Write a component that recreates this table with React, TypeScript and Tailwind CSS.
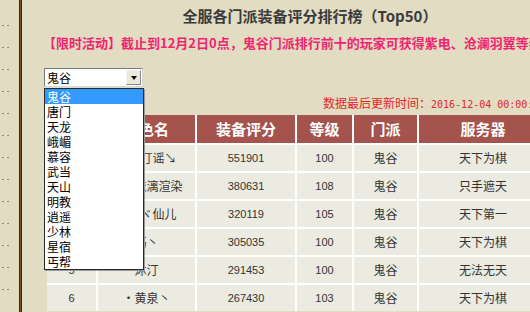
import React from 'react'

const sects = ['鬼谷', '唐门', '天龙', '峨嵋', '慕容', '武当', '天山', '明教', '逍遥', '少林', '星宿', '丐帮']

const rows = [
  { rank: 1, name: '烟雨仃谣↘', score: '551901', level: '100', sect: '鬼谷', server: '天下为棋' },
  { rank: 2, name: '墨染流漓渲染', score: '380631', level: '108', sect: '鬼谷', server: '只手遮天' },
  { rank: 3, name: '浅浅ヾ仙儿', score: '320119', level: '105', sect: '鬼谷', server: '天下第一' },
  { rank: 4, name: '殇丶', score: '305035', level: '100', sect: '鬼谷', server: '天下为棋' },
  { rank: 5, name: '沐汀', score: '291453', level: '100', sect: '鬼谷', server: '无法无天' },
  { rank: 6, name: '·黄泉丶', score: '267430', level: '103', sect: '鬼谷', server: '天下为棋' },
]

// column widths: rank, name, score, level, sect, server
const cols = ['w-[49px]', 'w-[97px]', 'w-[98px]', 'w-[55px]', 'w-[63px]', 'w-[128px]']

const cjk = { fontFamily: '"Noto Sans CJK SC", "Liberation Sans", sans-serif' }
const num = { fontFamily: '"Liberation Sans", "Noto Sans CJK SC", sans-serif' }

export default function App() {
  return (
    <div className="flex w-[530px] h-[312px] overflow-hidden bg-[#e2dcc2]" style={cjk}>
      {/* left strip with dashes */}
      <div className="w-[19px] shrink-0 flex flex-col gap-[17px] pt-[23px] pl-[2px]">
        {Array.from({ length: 13 }).map((_, i) => (
          <div key={i} className="flex gap-[3px] h-[5px] items-center">
            <span className="w-[2px] h-[1px] bg-[#8c8c80]" />
            <span className="w-[2px] h-[1px] bg-[#8c8c80]" />
          </div>
        ))}
      </div>
      <div className="w-[3px] shrink-0 bg-[#7a5426] border-l border-r border-[#3f2609]" />

      {/* content */}
      <div className="relative w-[576px] shrink-0">
        <div className="pt-[6px] h-[26px] text-center text-[15px] leading-[20px] font-bold text-[#3a3a3a]">
          全服各门派装备评分排行榜（Top50）
        </div>
        <div className="mt-[8px] pl-[21px] h-[18px] text-[13px] leading-[18px] font-bold text-[#f0256f] whitespace-nowrap">
          【限时活动】截止到12月2日0点，鬼谷门派排行前十的玩家可获得紫电、沧澜羽翼等奖励
        </div>

        {/* select */}
        <div className="mt-[16px] ml-[22px] w-[99px] h-[19px] flex items-center bg-white border border-t-[#7b7b7b] border-l-[#7b7b7b] border-r-[#d8d8d8] border-b-[#d8d8d8]">
          <span className="flex-1 pl-[2px] text-[12px] leading-[14px] text-black">鬼谷</span>
          <span className="w-[15px] h-[15px] mr-[1px] flex items-center justify-center bg-[#ece9d8] border border-t-[#f4f4f4] border-l-[#f4f4f4] border-r-[#8a8a8a] border-b-[#8a8a8a]">
            <span className="w-0 h-0 border-l-[3px] border-r-[3px] border-t-[4px] border-l-transparent border-r-transparent border-t-black" />
          </span>
        </div>

        <div className="mt-[9px] pl-[301px] h-[14px] text-[12px] leading-[14px] text-[#e3262b] whitespace-nowrap">
          数据最后更新时间：<span style={{ fontFamily: '"DejaVu Sans Mono", monospace' }} className="text-[10px]">2016-12-04 00:00:00</span>
        </div>

        {/* table */}
        <div className="mt-[5px] ml-[25px] flex flex-col gap-[2px] bg-white w-max">
          <div className="flex gap-[2px] h-[28px]">
            {['排名', '角色名', '装备评分', '等级', '门派', '服务器'].map((h, i) => (
              <div key={h} className={`${cols[i]} bg-[#a5534d] flex items-center justify-center text-white font-bold text-[15px]`}>
                {h}
              </div>
            ))}
          </div>
          {rows.map((r) => (
            <div key={r.rank} className="flex gap-[2px] h-[26px] text-[#333] text-[12px]">
              <div className={`${cols[0]} bg-[#ecebe1] flex items-center justify-center text-[11px]`} style={num}>{r.rank}</div>
              <div className={`${cols[1]} bg-[#ecebe1] flex items-center justify-center whitespace-nowrap`}>{r.name}</div>
              <div className={`${cols[2]} bg-[#ecebe1] flex items-center justify-center text-[11px]`} style={num}>{r.score}</div>
              <div className={`${cols[3]} bg-[#ecebe1] flex items-center justify-center text-[11px]`} style={num}>{r.level}</div>
              <div className={`${cols[4]} bg-[#ecebe1] flex items-center justify-center`}>{r.sect}</div>
              <div className={`${cols[5]} bg-[#ecebe1] flex items-center justify-center`}>{r.server}</div>
            </div>
          ))}
        </div>

        {/* open dropdown list */}
        <div className="absolute left-[22px] top-[88px] w-[100px] bg-white border border-[#2a2a2a] shadow-[1px_1px_0_#9a9a9a]">
          {sects.map((s, i) => (
            <div
              key={s}
              className={`h-[15px] pl-[2px] text-[12px] leading-[15px] ${i === 0 ? 'bg-[#3399ff] text-white' : 'text-black'}`}
            >
              {s}
            </div>
          ))}
        </div>
      </div>
    </div>
  )
}
